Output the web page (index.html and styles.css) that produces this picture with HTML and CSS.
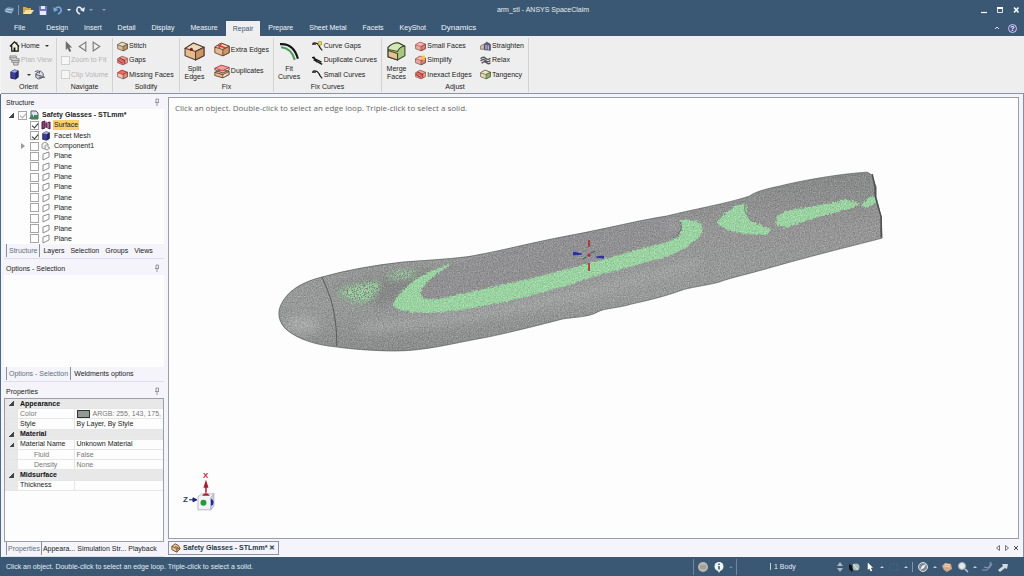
FILE: index.html
```html
<!DOCTYPE html>
<html lang="en">
<head>
    <meta charset="UTF-8">
    <title>arm_stl - ANSYS SpaceClaim</title>
    <link rel="stylesheet" href="styles.css">
</head>
<body>
    <!-- shared icons -->
    <svg class="defs" width="0" height="0">
        <symbol id="i-box" viewBox="0 0 20 18">
            <path d="M1 6 L9 1 L19 5 L19 13 L11 17 L1 13Z" fill="var(--front, #e9b98c)" stroke="#4b3a30"/>
            <path d="M1 6 L9 1 L19 5 L11 9Z" fill="var(--top, #f3d6b4)" stroke="var(--edge, #4b3a30)"/>
            <path d="M11 9 L19 5 L19 13 L11 17Z" fill="var(--side, #cf9468)" stroke="#4b3a30"/>
        </symbol>
        <symbol id="i-gap" viewBox="0 0 20 18">
            <path d="M1 6 L9 1 L19 5 L19 13 L11 17 L1 13Z" fill="#eca59c" stroke="#5a3430"/>
            <path d="M1 6 L11 10 L19 5 M11 10 L11 17" fill="none" stroke="#5a3430"/>
            <path d="M4 4 L14 9 L14 15 M2 9 L10 14" fill="none" stroke="#c61f1f" stroke-width="2"/>
        </symbol>
        <symbol id="i-stack" viewBox="0 0 20 18">
            <path d="M1 10 L10 6 L19 9 L11 13Z M1 10 V14 L11 17 V13 M11 17 L19 13 V9" fill="#e9b98c" stroke="#4b3a30"/>
            <path d="M1 5 L9 1 L19 4 L11 8Z" fill="#ef9ea4" stroke="#b02a2a"/>
            <path d="M1 5 V7 L11 11 L19 7 V4" fill="none" stroke="#4b3a30"/>
        </symbol>
        <symbol id="i-cursor" viewBox="0 0 10 12">
            <path d="M2 0 L2 10 L4 8 L6 12 L8 11 L6 7 L9 7Z" fill="currentColor"/>
        </symbol>
        <symbol id="i-plane" viewBox="0 0 10 10">
            <path d="M2 3 L8 1 L8 6 L2 9Z" fill="#fff" stroke="#8d8d8d"/>
        </symbol>
        <symbol id="i-pin" viewBox="0 0 6 8">
            <path d="M1 4.5 H5 M2 4.5 V1 H4.5 V4.5 M3 5 V8" fill="none" stroke="#808088" stroke-width=".8"/>
        </symbol>
        <symbol id="i-curve" viewBox="0 0 14 12">
            <path d="M1 2 Q6 0 9 5 Q10 8 13 11" fill="none" stroke="#161616" stroke-width="1.6"/>
            <path d="M0 3 L5 3" stroke="#161616" stroke-width="1.4"/>
        </symbol>
        <symbol id="i-cube" viewBox="0 0 10 12">
            <path d="M1 3 L5 1 L9 2 V9 L6 11 L1 10Z" fill="#3b3f97" stroke="#1f2258"/>
            <path d="M1 3 L5 1 L9 2 L6 4Z" fill="#a5aae2"/>
            <path d="M6 4 L9 2 V9 L6 11Z" fill="#232768"/>
        </symbol>
    </svg>

    <header class="titlebar">
        <div class="quick">
            <button aria-label="Application menu"><svg viewBox="0 0 12 10"><path d="M1 5 L5 2 L11 3 L10 7 L4 8Z" fill="#6f93b5"/><path d="M3 4 L10 5 M2 6 L9 8" stroke="#bcd0e2"/></svg></button>
            <span class="bar"></span>
            <button aria-label="Open"><svg viewBox="0 0 12 10"><path d="M1 9 V2 H4 L5 3 H9 V9Z" fill="#d9a64e"/><path d="M1 9 L4 5 H12 L9 9Z" fill="#fbe39d"/></svg></button>
            <button aria-label="Save"><svg viewBox="0 0 12 10"><path d="M2 1 H10 V10 H2Z" fill="#7176c4"/><path d="M4 1 H8 V4 H4Z M3 6 H9 V10 H3Z" fill="#e8eaff"/></svg></button>
            <button aria-label="Undo"><svg viewBox="0 0 12 10"><path d="M3 4 Q7 0 9 4 Q10 7 6 9" fill="none" stroke="#7fa6d8" stroke-width="1.6"/><path d="M1 2 L2 7 L6 5Z" fill="#7fa6d8"/></svg></button>
            <i class="drop light"></i>
            <button aria-label="Redo"><svg viewBox="0 0 12 10"><path d="M8 4 Q4 0 3 4 Q2 7 6 9" fill="none" stroke="#e6edf4" stroke-width="1.6"/><path d="M11 2 L10 7 L6 5Z" fill="#e6edf4"/></svg></button>
            <i class="drop dim"></i>
            <i class="drop dim last"></i>
        </div>
        <h1>arm_stl - ANSYS SpaceClaim</h1>
        <div class="window-buttons">
            <button aria-label="Minimize"><svg viewBox="0 0 8 8"><path d="M1 6.5 H7" stroke="#fff" stroke-width="1.2"/></svg></button>
            <button aria-label="Maximize"><svg viewBox="0 0 8 8"><path d="M1.5 2 V6.5 H6.5 V2" fill="none" stroke="#dfe7ee"/><path d="M1 2 H7" stroke="#fff" stroke-width="2"/></svg></button>
            <button aria-label="Close"><svg viewBox="0 0 8 8"><path d="M2 1.5 L6.5 6.5 M6.5 1.5 L2 6.5" stroke="#fff" stroke-width="1.5"/></svg></button>
        </div>
    </header>

    <nav class="tabs">
        <button>File</button>
        <button>Design</button>
        <button>Insert</button>
        <button>Detail</button>
        <button>Display</button>
        <button>Measure</button>
        <button class="active">Repair</button>
        <button>Prepare</button>
        <button>Sheet Metal</button>
        <button>Facets</button>
        <button>KeyShot</button>
        <button class="large">Dynamics</button>
        <span class="tabs-end">
            <svg class="up" viewBox="0 0 6 4"><path d="M1 3 L3 1 L5 3" fill="none" stroke="#dbe4ec"/></svg>
            <button class="help" aria-label="Help">?</button>
        </span>
    </nav>

    <section class="ribbon">
        <div class="group orient">
            <div class="tools">
                <div class="col">
                    <button><svg viewBox="0 0 12 12"><path d="M1 6 L6 1 L11 6 M3 5 V11 H10 V5" fill="#f6f2dc" stroke="#111" stroke-width="1.3"/><path d="M5 7 H7 V11 H5Z M8 1 H9 V4" fill="#111"/></svg>Home <i class="drop"></i></button>
                    <button disabled><svg viewBox="0 0 12 12"><path d="M1 1 H8 V4 H11 V8 H3 V5 H1Z M5 8 V11 H10 V8 M1 3 H8 M3 6 H11" fill="#d2d2d2" stroke="#8b8b8b"/></svg>Plan View</button>
                    <div class="pair">
                        <button aria-label="View"><svg viewBox="0 0 10 12"><use href="#i-cube"/></svg></button><i class="drop"></i>
                        <button aria-label="Spin"><svg viewBox="0 0 12 12"><path d="M2 5 L7 2 L10 5 L10 9 L5 11 L2 9Z" fill="#dedee8" stroke="#4c4c58"/><path d="M1 3 Q6 0 6 5 M2 6 L9 8 M5 9 L12 9" fill="none" stroke="#4c4c58"/></svg></button>
                    </div>
                </div>
            </div>
            <h2>Orient</h2>
        </div>
        <div class="group navigate">
            <div class="tools">
                <div class="col">
                    <div class="arrows">
                        <button aria-label="Select"><svg viewBox="0 0 10 12"><use href="#i-cursor"/></svg></button>
                        <button aria-label="Previous"><svg viewBox="0 0 10 10"><path d="M8 1 L2 5 L8 9Z" fill="#eee" stroke="#777"/></svg></button>
                        <button aria-label="Next"><svg viewBox="0 0 10 10"><path d="M2 1 L8 5 L2 9Z" fill="#eee" stroke="#777"/></svg></button>
                    </div>
                    <label class="off"><input type="checkbox" disabled>Zoom to Fit</label>
                    <label class="off"><input type="checkbox" disabled>Clip Volume</label>
                </div>
            </div>
            <h2>Navigate</h2>
        </div>
        <div class="group solidify">
            <div class="tools">
                <div class="col">
                    <button><svg class="tan" viewBox="0 0 20 18"><use href="#i-box"/></svg>Stitch</button>
                    <button><svg viewBox="0 0 20 18"><use href="#i-gap"/></svg>Gaps</button>
                    <button><svg class="red" viewBox="0 0 20 18"><use href="#i-box"/></svg>Missing Faces</button>
                </div>
            </div>
            <h2>Solidify</h2>
        </div>
        <div class="group fix">
            <div class="tools">
                <button class="big"><svg viewBox="0 0 20 18"><use href="#i-box"/><circle cx="7" cy="7" r="1.5" fill="#7d2418"/></svg>Split<br>Edges</button>
                <div class="col two">
                    <button><svg viewBox="0 0 20 18"><use href="#i-box"/><path d="M5 4 L15 7 M9 2 L6 7" stroke="#d43e38" stroke-width="2"/></svg>Extra Edges</button>
                    <button><svg viewBox="0 0 20 18"><use href="#i-stack"/></svg>Duplicates</button>
                </div>
            </div>
            <h2>Fix</h2>
        </div>
        <div class="group curves">
            <div class="tools">
                <button class="big"><svg viewBox="0 0 20 18"><path d="M1 2 Q14 1 18 16" fill="none" stroke="#161616" stroke-width="2"/><path d="M2 5 Q12 6 15 17" fill="none" stroke="#4c9a5a" stroke-width="2"/></svg>Fit<br>Curves</button>
                <div class="col">
                    <button><svg viewBox="0 0 14 12"><use href="#i-curve"/><path d="M8 0 H12 V4 H8Z" fill="#f5e45c" stroke="#a08b1c"/></svg>Curve Gaps</button>
                    <button><svg viewBox="0 0 14 12"><path d="M0 2 L12 8 M2 5 L13 11 M2 1 L6 8" stroke="#161616" stroke-width="1.7"/></svg>Duplicate Curves</button>
                    <button><svg viewBox="0 0 14 12"><use href="#i-curve"/></svg>Small Curves</button>
                </div>
            </div>
            <h2>Fix Curves</h2>
        </div>
        <div class="group adjust">
            <div class="tools">
                <button class="big"><svg viewBox="0 0 20 18"><path d="M2 5 Q7 0 12 1 L18 4 V13 L11 17 L2 14Z" fill="#a6c77c" stroke="#39422c"/><path d="M2 8 L11 11 V17 L2 14Z" fill="#eabf92" stroke="#39422c"/><path d="M2 5 Q7 0 12 1 L18 4 Q13 4 11 9 L2 7Z" fill="#d5e8b2" stroke="#39422c"/></svg>Merge<br>Faces</button>
                <div class="col">
                    <button><svg class="pink" viewBox="0 0 20 18"><use href="#i-box"/></svg>Small Faces</button>
                    <button><svg class="pink" viewBox="0 0 20 18"><use href="#i-box"/><path d="M12 0 H18 V8 H12Z" fill="#f2c04c"/></svg>Simplify</button>
                    <button><svg viewBox="0 0 20 18"><use href="#i-gap"/></svg>Inexact Edges</button>
                </div>
                <div class="col">
                    <button><svg viewBox="0 0 20 18"><path d="M1 8 L8 4 V14 L1 14Z" fill="#e2bda4" stroke="#444"/><path d="M8 5 L12 1 L19 5 V16 L8 15Z" fill="#5c5f8b" stroke="#333"/><path d="M11 6 V14 M15 7 V15" stroke="#e7e7f0" stroke-width="1.5"/></svg>Straighten</button>
                    <button><svg viewBox="0 0 20 18"><path d="M1 6 Q6 1 10 5 T19 5 M1 10 Q6 5 10 9 T19 9 M3 14 Q8 9 12 13 T19 13" fill="none" stroke="#55505a" stroke-width="2.5"/></svg>Relax</button>
                    <button><svg class="green" viewBox="0 0 20 18"><use href="#i-box"/></svg>Tangency</button>
                </div>
            </div>
            <h2>Adjust</h2>
        </div>
    </section>

    <main class="workspace">
        <aside class="sidebar">
            <section class="panel structure">
                <h3>Structure <svg viewBox="0 0 6 8"><use href="#i-pin"/></svg></h3>
                <ul class="tree">
                    <li class="root"><i class="open"></i><label><input type="checkbox" checked class="grey"><svg viewBox="0 0 10 10"><path d="M2 1 H7 L9 3 V9 H2Z" fill="#dfe5ea" stroke="#4c5d68"/><path d="M0 9 L3 4 L6 9Z M5 9 V5 H9 V9Z" fill="#47825b"/></svg><b>Safety Glasses - STLmm*</b></label></li>
                    <li><i></i><label><input type="checkbox" checked><svg viewBox="0 0 10 10"><path d="M1 2 L4 1 V8 L1 9Z M5 3 L9 2 V9 L5 7Z" fill="#8e3f77" stroke="#4a1e40"/><path d="M4 1 L7 3 V8" fill="none" stroke="#cf91b9"/></svg><span class="selected">Surface</span></label></li>
                    <li><i></i><label><input type="checkbox" checked><svg viewBox="0 0 10 12"><use href="#i-cube"/></svg>Facet Mesh</label></li>
                    <li><i class="closed"></i><label><input type="checkbox"><svg viewBox="0 0 10 10"><path d="M1 3 L4 1 L7 3 V6 L9 7 L6 9 L1 7Z M4 5 L7 3 M4 5 V8" fill="#f1f1f1" stroke="#9a9a9a"/></svg>Component1</label></li>
                    <li><i></i><label><input type="checkbox"><svg viewBox="0 0 10 10"><use href="#i-plane"/></svg>Plane</label></li>
                    <li><i></i><label><input type="checkbox"><svg viewBox="0 0 10 10"><use href="#i-plane"/></svg>Plane</label></li>
                    <li><i></i><label><input type="checkbox"><svg viewBox="0 0 10 10"><use href="#i-plane"/></svg>Plane</label></li>
                    <li><i></i><label><input type="checkbox"><svg viewBox="0 0 10 10"><use href="#i-plane"/></svg>Plane</label></li>
                    <li><i></i><label><input type="checkbox"><svg viewBox="0 0 10 10"><use href="#i-plane"/></svg>Plane</label></li>
                    <li><i></i><label><input type="checkbox"><svg viewBox="0 0 10 10"><use href="#i-plane"/></svg>Plane</label></li>
                    <li><i></i><label><input type="checkbox"><svg viewBox="0 0 10 10"><use href="#i-plane"/></svg>Plane</label></li>
                    <li><i></i><label><input type="checkbox"><svg viewBox="0 0 10 10"><use href="#i-plane"/></svg>Plane</label></li>
                    <li><i></i><label><input type="checkbox"><svg viewBox="0 0 10 10"><use href="#i-plane"/></svg>Plane</label></li>
                </ul>
                <div class="panel-tabs">
                    <button class="active">Structure</button>
                    <button>Layers</button>
                    <button>Selection</button>
                    <button>Groups</button>
                    <button>Views</button>
                </div>
            </section>

            <section class="panel options">
                <h3>Options - Selection <svg viewBox="0 0 6 8"><use href="#i-pin"/></svg></h3>
                <div class="blank"></div>
                <div class="panel-tabs">
                    <button class="active">Options - Selection</button>
                    <button>Weldments options</button>
                </div>
            </section>

            <section class="panel properties">
                <h3>Properties <svg viewBox="0 0 6 8"><use href="#i-pin"/></svg></h3>
                <div class="sheet">
                    <table>
                        <colgroup>
                            <col class="c-toggle">
                            <col class="c-name">
                            <col>
                        </colgroup>
                        <tr class="head"><td><i class="open"></i></td><th colspan="2">Appearance</th></tr>
                        <tr class="dim"><td></td><td>Color</td><td><span class="swatch"></span>ARGB: 255, 143, 175,</td></tr>
                        <tr><td></td><td>Style</td><td>By Layer, By Style</td></tr>
                        <tr class="head"><td><i class="open"></i></td><th colspan="2">Material</th></tr>
                        <tr><td><i class="open"></i></td><td>Material Name</td><td>Unknown Material</td></tr>
                        <tr class="dim"><td></td><td class="sub">Fluid</td><td>False</td></tr>
                        <tr class="dim"><td></td><td class="sub">Density</td><td>None</td></tr>
                        <tr class="head"><td><i class="open"></i></td><th colspan="2">Midsurface</th></tr>
                        <tr><td></td><td>Thickness</td><td></td></tr>
                    </table>
                </div>
                <div class="panel-tabs tight">
                    <button class="active">Properties</button>
                    <button>Appeara...</button>
                    <button>Simulation Str...</button>
                    <button>Playback</button>
                </div>
            </section>
        </aside>

        <section class="document">
            <div class="viewport">
                <p class="hint">Click an object. Double-click to select an edge loop. Triple-click to select a solid.</p>
                <svg class="scene" viewBox="169 98 850 440">
                    <defs>
                        <linearGradient id="shade" x1=".48" y1="0" x2=".56" y2="1">
                            <stop offset="0" stop-color="#868787"/>
                            <stop offset=".35" stop-color="#959595"/>
                            <stop offset=".7" stop-color="#989a9a"/>
                            <stop offset="1" stop-color="#8a8b8b"/>
                        </linearGradient>
                        <!-- triangle edges seen from far away -->
                        <filter id="facets" x="0" y="0" width="100%" height="100%" color-interpolation-filters="sRGB">
                            <feTurbulence type="fractalNoise" baseFrequency=".8" numOctaves="2" seed="4" result="n"/>
                            <feColorMatrix in="n" values="1 0 0 0 0  1 0 0 0 0  1 0 0 0 0  0 0 0 0 1" result="g"/>
                            <feComposite in="SourceGraphic" in2="g" operator="arithmetic" k2="1" k3=".3" k4="-.15" result="m"/>
                            <feComposite in="m" in2="SourceGraphic" operator="in"/>
                        </filter>
                        <filter id="rough" x="-5%" y="-5%" width="110%" height="110%" color-interpolation-filters="sRGB">
                            <feTurbulence type="fractalNoise" baseFrequency=".5" numOctaves="1" result="n"/>
                            <feDisplacementMap in="SourceGraphic" in2="n" scale="5" xChannelSelector="R" yChannelSelector="G"/>
                        </filter>
                        <filter id="scatter" x="-10%" y="-10%" width="120%" height="120%" color-interpolation-filters="sRGB">
                            <feGaussianBlur in="SourceGraphic" stdDeviation="3" result="b"/>
                            <feTurbulence type="fractalNoise" baseFrequency=".7" numOctaves="2" seed="9"/>
                            <feColorMatrix values="0 0 0 0 0  0 0 0 0 0  0 0 0 0 0  6 0 0 0 -2.2" result="s"/>
                            <feComposite in="b" in2="s" operator="in"/>
                        </filter>
                        <filter id="soft" x="-20%" y="-40%" width="140%" height="180%"><feGaussianBlur stdDeviation="4"/></filter>
                        <path id="arm" d="M322 277 C347 270 375 265 403 262 C430 260 465 258 477 255 C500 251 535 242 567 236 C610 228 640 220 667 216 C690 210 730 203 750 196 C757 191 770 188 780 186 C800 181 837 174 868 172 L873 175 L874 179 L877 187 L877 197 L882 217 L883 238 C860 244 815 255 773 267 C745 275 730 278 720 282 C705 286 690 287 680 291 C660 298 645 301 632 304 C620 308 605 308 598 312 C590 317 575 317 563 319 C540 325 500 335 483 338 C450 344 425 351 395 351 C375 351 350 349 337 347 C315 345 298 339 287 330 C279 323 277 313 281 305 C287 291 302 282 322 277Z"/>
                        <clipPath id="arm-clip"><use href="#arm"/></clipPath>
                    </defs>
                    <g filter="url(#facets)">
                        <use href="#arm" fill="url(#shade)"/>
                        <g clip-path="url(#arm-clip)">
                            <path d="M450 265 C430 278 420 288 421 294 C424 303 450 297 470 293 L640 249 C665 242 684 234 681 222 C660 216 560 236 450 265Z" fill="#919093"/>
                            <path d="M330 288 C360 278 400 270 440 268 L393 305 C370 308 345 302 330 288Z" fill="#868786" filter="url(#soft)"/>
                            <ellipse cx="302" cy="325" rx="18" ry="9" fill="#a7a8a8" filter="url(#soft)"/>
                            <path d="M360 327 C470 322 590 295 700 262" fill="none" stroke="#a0a3a3" stroke-width="10" filter="url(#soft)"/>
                            <g fill="#9ad2a0" filter="url(#scatter)">
                                <path d="M336 291 C350 283 365 284 380 280 C382 290 375 303 361 303 C352 303 344 298 336 291Z"/>
                                <path d="M386 278 C395 268 410 270 419 272 C415 280 398 278 390 280Z"/>
                                <path d="M345 292 C352 286 370 286 377 284 C376 296 370 302 358 300Z"/>
                            </g>
                            <g fill="#9ad2a1" filter="url(#rough)">
                                <path d="M451 264 C438 268 427 273 418 278 C406 286 396 297 393 305 C398 312 420 314 443 312 C465 310 490 305 510 301 L563 287 L597 276 L633 266 L670 256 C686 249 699 241 703 231 C704 222 696 218 680 220 C685 230 682 236 673 240 C660 245 650 246 640 249 L613 257 L573 268 L533 278 L470 292 C455 296 440 300 428 299 C419 297 419 291 426 284 C432 277 441 271 451 264Z"/>
                                <path d="M745 203 C735 205 727 210 718 222 C720 229 735 232 747 234 L768 235 L772 229 L753 222 C748 216 746 211 748 206Z"/>
                                <path d="M777 217 L785 211 L837 202 L847 199 L861 203 L853 208 L823 216 L803 222 L787 228 L777 225Z"/>
                                <path d="M862 206 L866 200 L875 195 L878 202 L868 207Z"/>
                            </g>
                            <ellipse cx="673" cy="226" rx="5" ry="4" fill="#a3a1a7" filter="url(#soft)"/>
                            <path d="M681 222 C684 229 680 234 673 238" fill="none" stroke="#707373"/>
                            <path d="M746 203 C744 211 748 217 753 221" fill="none" stroke="#747876"/>
                        </g>
                    </g>
                    <use href="#arm" fill="none" stroke="#656868" stroke-width=".8"/>
                    <path d="M322 277 C329 292 337 310 337 346" fill="none" stroke="#505454" stroke-width=".9"/>
                    <path d="M873 174 L876 187 L876 196 L882 217 L882 237" fill="none" stroke="#4d5050" stroke-width="1.5"/>
                    <!-- rotation centre -->
                    <path d="M589.5 240 V247 M589.5 263 V271" stroke="#b3202c" stroke-width="1.5"/>
                    <path d="M574 252 L582 254 L574 255Z M604 256 L597 257 L604 258Z" fill="#2330a8" stroke="#2330a8"/>
                    <path d="M583 259 L587 257 M591 253 L596 251" stroke="#33674a"/>
                    <circle cx="589.5" cy="255" r="1.7" fill="#c3243a"/>
                    <!-- world triad -->
                    <g class="triad">
                        <path d="M198 497 L202 494 H214 L211 498 V510 H198Z" fill="#f2f2f8" stroke="#a9abbe" stroke-width=".8"/>
                        <path d="M211 498 L214 494 V506 L211 510Z" fill="#cfd1e0" stroke="#a9abbe" stroke-width=".8"/>
                        <path d="M202 496 Q206 491 210 496Z" fill="#a81c2c"/>
                        <path d="M206 493 V487" stroke="#a81c2c" stroke-width="1.5"/>
                        <path d="M206 480 L208.5 488 H203.5Z" fill="#a81c2c"/>
                        <path d="M211 499 Q215 501 213 505 L211 506Z" fill="#1c2aa0"/>
                        <circle cx="203.5" cy="503" r="3" fill="#259a37"/>
                        <path d="M189 500 H194 M193 498 L197 500 L193 502Z" fill="#1c2380" stroke="#1c2380"/>
                        <text x="203" y="478" fill="#d02648">X</text>
                        <text x="183" y="502" fill="#2a2fc0">Z</text>
                    </g>
                </svg>
            </div>
            <div class="doc-tabs">
                <button><svg viewBox="0 0 12 12"><path d="M1 4 L5 1 L9 3 L11 7 L7 11 L1 8Z" fill="#e8c79f" stroke="#6b4221"/><path d="M1 4 L7 7 L11 7 M7 7 V11 M5 4 L9 6" fill="none" stroke="#6b4221"/></svg>Safety Glasses - STLmm* <span>✕</span></button>
                <div class="doc-nav">
                    <svg viewBox="0 0 6 8"><path d="M4.5 1.5 L1.5 4 L4.5 6.5Z" fill="none" stroke="#555" stroke-width=".8"/></svg>
                    <svg viewBox="0 0 6 8"><path d="M1.5 1.5 L4.5 4 L1.5 6.5Z" fill="none" stroke="#555" stroke-width=".8"/></svg>
                    <svg viewBox="0 0 6 8"><path d="M1 2 L5 6 M5 2 L1 6" stroke="#444"/></svg>
                </div>
            </div>
        </section>
    </main>

    <footer class="statusbar">
        <p>Click an object. Double-click to select an edge loop. Triple-click to select a solid.</p>
        <div class="messages">
            <svg viewBox="0 0 12 12"><circle cx="6" cy="6" r="5" fill="#b9b5b0"/><path d="M3 5 H9 M3 7 H9" stroke="#8d8a87"/></svg>
            <svg viewBox="0 0 12 12"><path d="M6 1 A4.5 4.5 0 1 1 5 10 L6 12 L7 10" fill="#f3f7fa"/><circle cx="6" cy="5.5" r="4.5" fill="#f3f7fa"/><path d="M6 2.5 V4 M6 5 V8.5" stroke="#33506b" stroke-width="1.5"/></svg>
            <i class="rise faint"></i>
        </div>
        <div class="count"><span>1 Body</span></div>
        <div class="modes">
            <svg class="slim" viewBox="0 0 8 12"><path d="M1 5 L4 1 L7 5Z M1 7 L4 11 L7 7Z" fill="#aab8c4"/></svg>
            <svg viewBox="0 0 12 12"><path d="M1 3 L6 6 L4 11 L1 8Z" fill="#101418"/><circle cx="8" cy="6" r="3.5" fill="#a9c0b6"/><path d="M5 3 L10 9" stroke="#e4efe8"/></svg>
            <svg class="white" viewBox="-2 -2 14 16"><use href="#i-cursor" width="10" height="12"/></svg>
            <i class="rise"></i>
            <svg viewBox="0 0 12 12"><path d="M2 3 H10 V9 H2Z" fill="none" stroke="#4f6378" stroke-dasharray="2 1"/></svg>
            <i class="rise"></i>
            <span class="bar"></span>
            <svg viewBox="0 0 12 12"><circle cx="6" cy="6" r="4.5" fill="#7e8b92" stroke="#d9dfe2"/><path d="M3 9 L5 5 L9 3 L7 7Z" fill="#eef1f2"/></svg>
            <i class="rise"></i>
            <svg viewBox="0 0 12 12"><path d="M1 5 L4 2 L10 3 L11 8 L6 11 L3 9Z" fill="#d3a789"/><path d="M3 5 L9 6 M4 3 L9 4" stroke="#f0d3bd"/></svg>
            <svg viewBox="0 0 12 12"><circle cx="5" cy="5" r="3.5" fill="#e6eaed" stroke="#a6b0b8"/><path d="M8 8 L11 11" stroke="#c4ccd2" stroke-width="1.5"/></svg>
            <i class="rise"></i>
            <svg viewBox="0 0 12 12"><path d="M1 9 H6 L10 3 M3 6 L8 7 L11 3 M8 2 H11" fill="none" stroke="#8796b0" stroke-width="1.2"/></svg>
            <svg viewBox="0 0 12 12"><path d="M1 9 L6 5 L5 3 H11 L10 8 L8 7 L3 11Z" fill="#d5dade"/></svg>
        </div>
    </footer>
</body>
</html>
```
FILE: styles.css
```css
* {
    box-sizing: border-box;
}

body {
    margin: 0;
    height: 100vh;
    display: flex;
    flex-direction: column;
    font: 7px/10px "Liberation Sans", Arial, sans-serif;
    color: #222;
    background-color: #f4f4fa;
    overflow: hidden;
}

h1, h2, h3, p, ul {
    margin: 0;
    padding: 0;
    font-size: inherit;
    font-weight: normal;
}

button {
    margin: 0;
    padding: 0;
    border: 0;
    background: none;
    font: inherit;
    color: inherit;
    white-space: nowrap;
}

svg {
    display: block;
    flex: none;
}

.defs {
    position: absolute;
}

.bar {
    width: 1px;
    height: 10px;
    background-color: #7f96aa;
}

.drop {
    border: 2px solid transparent;
    border-top-color: #333;
    border-bottom: 0;
}

.drop.light { border-top-color: #fff; }
.drop.dim { border-top-color: #8ba2b8; }

/* title bar */
.titlebar {
    display: flex;
    align-items: center;
    justify-content: space-between;
    height: 20px;
    padding: 0 4px 0 3px;
    background-color: #3a5874;
    color: #e6ecf1;
    position: relative;
}

.titlebar h1 {
    position: absolute;
    left: 0;
    right: 0;
    padding-left: 62px;
    text-align: center;
}

.quick, .window-buttons {
    display: flex;
    align-items: center;
    gap: 3px;
    z-index: 1;
}

.quick svg {
    width: 12px;
    height: 10px;
}

.quick .last {
    margin-left: 6px;
}

.window-buttons {
    gap: 8px;
}

.window-buttons svg {
    width: 8px;
    height: 8px;
}

/* ribbon tabs */
.tabs {
    display: flex;
    height: 16px;
    padding-left: 6px;
    background-color: #3a5874;
    color: #f1f5f8;
}

.tabs > button {
    padding: 0 8px;
}

.tabs > button:first-child {
    padding-right: 13px;
}

.tabs .active {
    margin-top: 1px;
    padding: 0 7px;
    background-color: #efefef;
    color: #3c5873;
}

.tabs .large {
    font-size: 8px;
    padding: 0 7px;
}

.tabs-end {
    display: flex;
    align-items: center;
    gap: 8px;
    margin-left: auto;
    padding-right: 7px;
}

.up {
    width: 6px;
    height: 4px;
}

.help {
    width: 9px;
    height: 9px;
    border: 1px solid #c9cdf0;
    border-radius: 50%;
    background-color: #4d4d8c;
    color: #fff;
    font-weight: bold;
    line-height: 7px;
}

/* ribbon */
.ribbon {
    display: flex;
    height: 58px;
    margin-left: 1px;
    padding: 2px 0 1px;
    background-color: #eeeeee;
    border-bottom: 1px solid #8d94a1;
}

.group {
    display: flex;
    flex-direction: column;
    border-right: 1px solid #d2d2d2;
}

.group h2 {
    text-align: center;
}

.tools {
    flex: 1;
    display: flex;
    justify-content: space-between;
    padding: 1px 4px 0;
}

.col {
    display: grid;
    grid-template-rows: repeat(3, 1fr);
    align-items: center;
}

.col.two {
    grid-template-rows: 1fr 1fr;
}

.col button, .col label {
    display: flex;
    align-items: center;
    gap: 1px;
    white-space: nowrap;
}

.col svg {
    width: 11px;
    height: 11px;
}

.col.two svg {
    width: 16px;
    height: 15px;
}

.col .drop {
    margin-left: 4px;
}

.big {
    text-align: center;
    line-height: 8px;
}

.big svg {
    width: 21px;
    height: 21px;
    margin: 0 auto 3px;
}

button:disabled, .off {
    color: #b4b4b4;
}

.pair, .arrows {
    display: flex;
    align-items: center;
    gap: 3px;
}

.arrows {
    justify-content: space-between;
    padding: 0 6px 0 2px;
    color: #6d6d70;
}

.orient { width: 56px; }
.orient .tools { padding-left: 8px; }
.navigate { width: 56px; }
.solidify { width: 67px; }
.fix { width: 94px; }
.curves { width: 108px; }
.adjust { width: 147px; }

.tan { --top: #eadbb9; --front: #d9bd95; --side: #b3946c; }
.red { --top: #ef6a62; --front: #f2c2b4; --side: #d98d7d; --edge: #b51c1c; }
.pink { --top: #f5b9b4; --front: #f0a59d; --side: #e07d78; --edge: #a83c38; }
.green { --top: #e5e9c7; --front: #dfd9b6; --side: #8eb565; }

/* check boxes */
input[type="checkbox"] {
    appearance: none;
    flex: none;
    width: 9px;
    height: 9px;
    margin: 0;
    border: 1px solid #a6a6a6;
    background-color: #fff;
    display: grid;
    place-items: center;
}

input[type="checkbox"]:disabled {
    border-color: #cfcfcf;
    background-color: #f6f6f6;
}

input[type="checkbox"]:checked::after {
    content: "";
    width: 3px;
    height: 5px;
    border: solid #333;
    border-width: 0 1px 1px 0;
    transform: rotate(40deg);
}

input.grey:checked::after {
    border-color: #aaa;
}

/* workspace */
.workspace {
    flex: 1;
    min-height: 0;
    display: flex;
    gap: 4px;
    padding: 3px 4px 0 3px;
    border-left: 1px solid #4d6a86;
    border-right: 1px solid #7f93a6;
}

.sidebar {
    flex: none;
    width: 160px;
    display: flex;
    flex-direction: column;
    gap: 4px;
}

.panel {
    display: flex;
    flex-direction: column;
    min-height: 0;
}

.structure { flex: 162 1 0; }
.options { flex: 119 1 0; }
.properties { flex: 171 1 0; }

.panel h3 {
    display: flex;
    justify-content: space-between;
    height: 12px;
    padding: 1px 4px 0 2px;
}

.panel h3 svg {
    width: 6px;
    height: 8px;
}

.tree, .blank, .sheet {
    flex: 1;
    min-height: 0;
    background-color: #fdfdfe;
}

.tree {
    display: flex;
    flex-direction: column;
    padding: 1px 0 0 17px;
    list-style: none;
}

.tree li {
    flex: 1;
    display: flex;
    align-items: center;
    gap: 4px;
}

.tree .root {
    margin-left: -12px;
}

.tree i {
    width: 5px;
}

.tree label {
    display: flex;
    align-items: center;
    gap: 2px;
}

.tree svg {
    width: 10px;
    height: 10px;
    margin-right: 1px;
}

.open {
    display: block;
    width: 5px;
    height: 5px;
    background: linear-gradient(135deg, transparent 50%, #444 50%);
}

.tree .closed {
    border: 3px solid transparent;
    border-left: 4px solid #999;
    border-right: 0;
}

.selected {
    background-color: #f8d06c;
    padding: 0 1px;
    margin-left: -1px;
}

.panel-tabs {
    display: flex;
    height: 15px;
    padding: 0 2px 1px;
    border-bottom: 1px solid #dedee8;
}

.panel-tabs button {
    padding: 0 3px;
}

.panel-tabs .active {
    padding: 0 2px;
    border: solid #85909e;
    border-width: 0 1px;
    color: #5f7080;
}

.panel-tabs.tight button {
    padding: 0 1px;
}

/* property sheet */
.sheet {
    border: 1px solid #9aa0aa;
    overflow: hidden;
}

table {
    width: 100%;
    height: 92px;
    border-collapse: collapse;
    table-layout: fixed;
}

.c-toggle {
    width: 13px;
}

.c-name {
    width: 56px;
}

td, th {
    padding: 0 2px;
    border-bottom: 1px solid #e6e6e6;
    line-height: 8px;
    text-align: left;
    white-space: nowrap;
}

td:first-child {
    padding: 0 4px;
    background-color: #e8e8e8;
}

td:nth-child(2) {
    border-right: 1px solid #e6e6e6;
}

th {
    color: #111;
}

.head {
    background-color: #e8e8e8;
}

.dim {
    color: #777;
}

td.sub {
    padding-left: 16px;
}

.swatch {
    display: inline-block;
    width: 13px;
    height: 8px;
    margin-right: 3px;
    border: 1px solid #333;
    background-color: #8f9a94;
    vertical-align: top;
}

/* model view */
.document {
    flex: 1;
    min-width: 0;
    display: flex;
    flex-direction: column;
}

.viewport {
    flex: 1;
    min-height: 0;
    position: relative;
    border: 1px solid #9b9dab;
    background-color: #fdfdfd;
}

.hint {
    position: absolute;
    top: 5px;
    left: 6px;
    font-family: "Open Sans", sans-serif;
    font-size: 8px;
    color: #666;
}

.scene {
    width: 100%;
    height: 100%;
}

.triad text {
    font-size: 8px;
    font-weight: bold;
}

.doc-tabs {
    display: flex;
    align-items: center;
    justify-content: space-between;
    height: 18px;
    padding: 2px 0;
}

.doc-tabs button {
    display: flex;
    align-items: center;
    gap: 2px;
    height: 14px;
    padding: 0 3px 0 2px;
    border: 1px solid #8b93a3;
    color: #27384a;
    font-weight: bold;
}

.doc-tabs button svg {
    width: 10px;
    height: 10px;
}

.doc-nav {
    display: flex;
    gap: 3px;
}

.doc-nav svg {
    width: 6px;
    height: 8px;
}

/* status bar */
.statusbar {
    display: flex;
    align-items: center;
    height: 19px;
    padding: 0 15px 0 6px;
    background-color: #3a5874;
    color: #e4ebf1;
}

.statusbar svg {
    width: 12px;
    height: 12px;
}

.statusbar svg.slim {
    width: 8px;
}

.messages, .modes {
    display: flex;
    align-items: center;
    gap: 4px;
}

.messages {
    width: 44px;
    height: 16px;
    margin-left: auto;
    padding-left: 3px;
    border: solid #6f879d;
    border-width: 0 1px;
}

.count {
    width: 99px;
    padding-left: 33px;
}

.count span {
    padding-left: 3px;
    border-left: 1px solid #c5d0da;
}

.white {
    color: #fff;
}

.rise {
    border: 2px solid transparent;
    border-bottom-color: #c4d0da;
    border-top: 0;
}

.rise.faint {
    border-bottom-color: #6f879d;
}
```
